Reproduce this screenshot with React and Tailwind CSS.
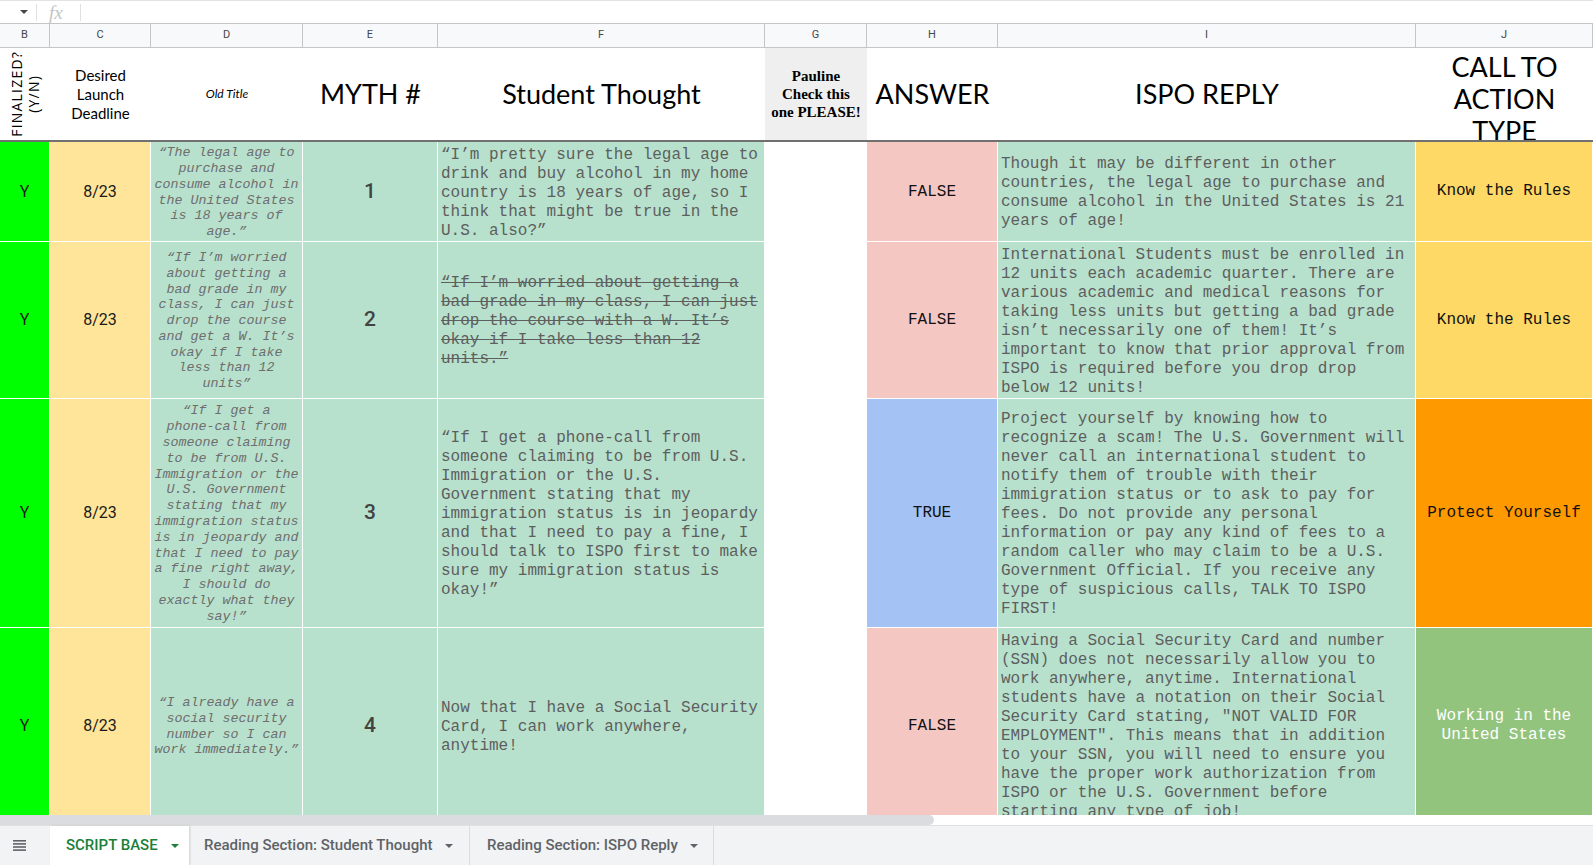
import React from "react";

// shared column template so the letter row, header row and data rows line up
const grid = "grid grid-cols-[50px_101px_152px_135px_327px_102px_131px_418px_177px]";
const mono = "font-['Liberation_Mono','Courier_New',monospace]";
const lato = "font-['Lato','Liberation_Sans',sans-serif]";
const roboto = "font-['Roboto','Liberation_Sans',sans-serif]";

const letters = ["B", "C", "D", "E", "F", "G", "H", "I", "J"];

const rows = [
  {
    h: "h-[100px]",
    old: <>“The legal age to purchase and consume alcohol in the United States is 18 years of age.”</>,
    num: "1",
    thought:
      "“I’m pretty sure the legal age to drink and buy alcohol in my home country is 18 years of age, so I think that might be true in the U.S. also?”",
    strike: false,
    answer: "FALSE",
    answerBg: "bg-[#f4c7c3]",
    reply:
      "Though it may be different in other countries, the legal age to purchase and consume alcohol in the United States is 21 years of age!",
    cta: "Know the Rules",
    ctaBg: "bg-[#ffd966]",
    ctaText: "text-[#111]",
  },
  {
    h: "h-[157px]",
    old: <>“If I’m worried about getting a bad grade in my class, I can just drop the course and get a W. It’s okay if I take less than 12 units”</>,
    num: "2",
    thought:
      "“If I’m worried about getting a bad grade in my class, I can just drop the course with a W. It’s okay if I take less than 12 units.”",
    strike: true,
    answer: "FALSE",
    answerBg: "bg-[#f4c7c3]",
    reply:
      "International Students must be enrolled in 12 units each academic quarter. There are various academic and medical reasons for taking less units but getting a bad grade isn’t necessarily one of them! It’s important to know that prior approval from ISPO is required before you drop drop below 12 units!",
    cta: "Know the Rules",
    ctaBg: "bg-[#ffd966]",
    ctaText: "text-[#111]",
  },
  {
    h: "h-[229px]",
    old: (
      <>
        “If I get a <span className="whitespace-nowrap">phone-call</span> from someone claiming to be from U.S. Immigration or the U.S.
        Government stating that my immigration status is in jeopardy and that I need to pay a fine right away, I should do exactly
        what they say!”
      </>
    ),
    num: "3",
    thought:
      "“If I get a phone-call from someone claiming to be from U.S. Immigration or the U.S. Government stating that my immigration status is in jeopardy and that I need to pay a fine, I should talk to ISPO first to make sure my immigration status is okay!”",
    strike: false,
    answer: "TRUE",
    answerBg: "bg-[#a4c2f4]",
    reply:
      "Project yourself by knowing how to recognize a scam! The U.S. Government will never call an international student to notify them of trouble with their immigration status or to ask to pay for fees. Do not provide any personal information or pay any kind of fees to a random caller who may claim to be a U.S. Government Official. If you receive any type of suspicious calls, TALK TO ISPO FIRST!",
    cta: "Protect Yourself",
    ctaBg: "bg-[#ff9900]",
    ctaText: "text-[#111]",
  },
  {
    h: "h-[196px]",
    old: <>“I already have a social security number so I can work immediately.”</>,
    num: "4",
    thought: "Now that I have a Social Security Card, I can work anywhere, anytime!",
    strike: false,
    answer: "FALSE",
    answerBg: "bg-[#f4c7c3]",
    reply:
      "Having a Social Security Card and number (SSN) does not necessarily allow you to work anywhere, anytime. International students have a notation on their Social Security Card stating, \"NOT VALID FOR EMPLOYMENT\". This means that in addition to your SSN, you will need to ensure you have the proper work authorization from ISPO or the U.S. Government before starting any type of job!",
    cta: "Working in the United States",
    ctaBg: "bg-[#93c47d]",
    ctaText: "text-white",
  },
];

const Caret = ({ color = "#5f6368" }) => (
  <svg width="8" height="4" viewBox="0 0 8 4">
    <path d="M0 0h8L4 4z" fill={color} />
  </svg>
);

const cell = "flex items-center overflow-hidden border-r border-b border-white";

const App = () => {
  return (
    <div className="w-[1593px] h-[865px] flex flex-col overflow-hidden bg-white">
      {/* formula bar */}
      <div className="h-[24px] shrink-0 flex items-center border-t border-b border-t-[#e3e3e3] border-b-[#c4c7c5] bg-white">
        <div className="w-[36px] flex justify-end pr-[8px]">
          <Caret color="#444746" />
        </div>
        <div className="w-px h-[17px] bg-[#e0e0e0]" />
        <div className="w-[43px] pl-[12px] italic text-[19px] leading-none text-[#c4c4c4] font-['Liberation_Serif',serif]">fx</div>
        <div className="w-px h-[17px] bg-[#e0e0e0]" />
      </div>

      {/* column letters */}
      <div className={`${grid} h-[24px] shrink-0 bg-[#f8f9fa] border-b border-[#c4c7c5]`}>
        {letters.map((l) => (
          <div key={l} className={`flex items-center justify-center border-r border-[#c4c7c5] text-[11px] text-[#444746] ${roboto}`}>
            {l}
          </div>
        ))}
      </div>

      {/* sheet body */}
      <div className="flex-1 overflow-hidden">
        {/* header row */}
        <div className={`${grid} h-[94px] border-b-2 border-[#707070] bg-white text-black ${lato}`}>
          <div className="flex items-center justify-center overflow-hidden">
            <span className="[writing-mode:vertical-rl] rotate-180 text-center text-[14px] leading-[17px] tracking-[1.2px] font-['Open_Sans','Lato',sans-serif]">
              FINALIZED?
              <br />
              (Y/N)
            </span>
          </div>
          <div className="flex items-center justify-center text-center text-[15px] leading-[19px]">
            Desired
            <br />
            Launch
            <br />
            Deadline
          </div>
          <div className="flex items-center justify-center italic text-[12px]">Old Title</div>
          <div className="flex items-center justify-center text-[27px]">MYTH #</div>
          <div className="flex items-center justify-center text-[27px]">Student Thought</div>
          <div className="flex items-center justify-center text-center bg-[#efefef] text-[15px] leading-[18px] font-bold font-['Liberation_Serif',serif]">
            Pauline
            <br />
            Check this
            <br />
            one PLEASE!
          </div>
          <div className="flex items-center justify-center text-[27px]">ANSWER</div>
          <div className="flex items-center justify-center text-[27px]">ISPO REPLY</div>
          <div className="flex justify-center overflow-hidden pt-[3px] text-center text-[27px] leading-[32px]">
            CALL TO
            <br />
            ACTION
            <br />
            TYPE
          </div>
        </div>

        {/* data rows */}
        {rows.map((r) => (
          <div key={r.num} className={`${grid} ${r.h}`}>
            <div className={`${cell} justify-center bg-[#00ff00] text-[16px] text-[#1a1a1a] ${roboto}`}>Y</div>
            <div className={`${cell} justify-center bg-[#ffe599] text-[16px] text-[#1a1a1a] ${roboto}`}>8/23</div>
            <div className={`${cell} justify-center bg-[#b7e1cd] px-[2px] pt-[2px] text-center italic text-[13.33px] leading-[15.8px] text-[#6e6e6e] ${mono}`}>
              <span>{r.old}</span>
            </div>
            <div className={`${cell} justify-center bg-[#b7e1cd] text-[21px] font-medium text-[#434343] ${roboto}`}>{r.num}</div>
            <div className={`${cell} bg-[#b7e1cd] px-[3px] pt-[3px] text-[16px] leading-[19px] text-[#5e5e5e] ${mono}`}>
              <span className={r.strike ? "line-through" : ""}>{r.thought}</span>
            </div>
            <div className="bg-white" />
            <div className={`${cell} justify-center ${r.answerBg} text-[16px] text-[#111] ${mono}`}>{r.answer}</div>
            <div className={`${cell} bg-[#b7e1cd] px-[3px] pt-[3px] text-[16px] leading-[19px] text-[#5e5e5e] ${mono}`}>
              <span>{r.reply}</span>
            </div>
            <div className={`${cell} justify-center ${r.ctaBg} px-[3px] text-center text-[16px] leading-[19px] ${r.ctaText} ${mono}`}>
              {r.cta}
            </div>
          </div>
        ))}
      </div>

      {/* horizontal scrollbar */}
      <div className="h-[10px] shrink-0 bg-white">
        <div className="w-[934px] h-full rounded-r-full bg-[#dadce0]" />
      </div>

      {/* sheet tabs */}
      <div className={`h-[40px] shrink-0 flex bg-[#f1f3f4] border-t border-[#e0e0e0] text-[15px] font-medium ${roboto}`}>
        <div className="w-[50px] flex items-center pl-[13px]">
          <svg width="13" height="11" viewBox="0 0 13 11">
            <rect y="0" width="13" height="1.6" fill="#5f6368" />
            <rect y="3.1" width="13" height="1.6" fill="#5f6368" />
            <rect y="6.2" width="13" height="1.6" fill="#5f6368" />
            <rect y="9.3" width="13" height="1.6" fill="#5f6368" />
          </svg>
        </div>
        <div className="w-[139px] flex items-center gap-[13px] pl-[16px] bg-white text-[#188038] shadow-[1px_0_2px_rgba(60,64,67,0.2)]">
          SCRIPT BASE
          <Caret color="#188038" />
        </div>
        <div className="w-[281px] flex items-center gap-[12px] pl-[15px] border-r border-[#dadce0] text-[#5f6368]">
          Reading Section: Student Thought
          <Caret />
        </div>
        <div className="w-[244px] flex items-center gap-[12px] pl-[17px] border-r border-[#dadce0] text-[#5f6368]">
          Reading Section: ISPO Reply
          <Caret />
        </div>
      </div>
    </div>
  );
};

export default App;
